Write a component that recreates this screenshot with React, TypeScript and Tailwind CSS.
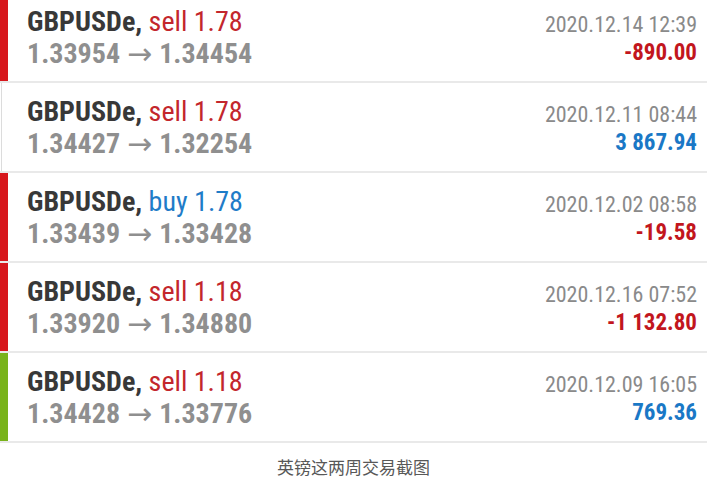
import React from 'react';

type Trade = {
  side: 'sell' | 'buy';
  lots: string;
  open: string;
  close: string;
  time: string;
  profit: string;
  stripe: 'red' | 'green' | 'none';
};

const trades: Trade[] = [
  { side: 'sell', lots: '1.78', open: '1.33954', close: '1.34454', time: '2020.12.14 12:39', profit: '-890.00', stripe: 'red' },
  { side: 'sell', lots: '1.78', open: '1.34427', close: '1.32254', time: '2020.12.11 08:44', profit: '3 867.94', stripe: 'none' },
  { side: 'buy', lots: '1.78', open: '1.33439', close: '1.33428', time: '2020.12.02 08:58', profit: '-19.58', stripe: 'red' },
  { side: 'sell', lots: '1.18', open: '1.33920', close: '1.34880', time: '2020.12.16 07:52', profit: '-1 132.80', stripe: 'red' },
  { side: 'sell', lots: '1.18', open: '1.34428', close: '1.33776', time: '2020.12.09 16:05', profit: '769.36', stripe: 'green' },
];

function Row({ t }: { t: Trade }) {
  const loss = t.profit.startsWith('-');
  return (
    <div className="flex h-[90px] border-b-2 border-[#e9e9e9]">
      {/* status stripe */}
      {t.stripe === 'red' && <div className="w-[8px] shrink-0 bg-[#d7171c]" />}
      {t.stripe === 'green' && <div className="w-[8px] shrink-0 bg-[#79b31b]" />}
      {t.stripe === 'none' && (
        <div className="w-[8px] shrink-0">
          <div className="ml-[1px] h-full w-px bg-[#dcdcdc]" />
        </div>
      )}
      <div className="flex flex-1 items-start justify-between pl-[19px] pr-[10px] pt-[13px]">
        <div className="font-stretch-condensed leading-[32px] text-[28px]">
          <div className="whitespace-nowrap">
            <span className="font-bold text-[#383838]">GBPUSDe,</span>{' '}
            <span className={t.side === 'sell' ? 'text-[#c3262c]' : 'text-[#1f7cc8]'}>
              {t.side} {t.lots}
            </span>
          </div>
          <div className="flex h-[32px] items-center whitespace-nowrap font-bold text-[#8f8f8f]">
            <span>{t.open}</span>
            <span className="mx-[7px] font-['DejaVu_Sans',sans-serif] text-[30px] leading-[32px] font-normal font-stretch-normal">
              →
            </span>
            <span>{t.close}</span>
          </div>
        </div>
        <div className="flex flex-col items-end pt-[5px] font-stretch-condensed">
          <div className="whitespace-nowrap text-[22px] leading-[27px] text-[#8a8a8a]">{t.time}</div>
          <div
            className={`whitespace-nowrap text-[23px] font-bold leading-[30px] ${
              loss ? 'text-[#c2161d]' : 'text-[#1a78c6]'
            }`}
          >
            {t.profit}
          </div>
        </div>
      </div>
    </div>
  );
}

export default function App() {
  return (
    <div className="h-[482px] w-[707px] overflow-hidden bg-white font-['Roboto',sans-serif]">
      <div className="-mt-[7px]">
        {trades.map((t, i) => (
          <Row key={i} t={t} />
        ))}
      </div>
      <div className="flex h-[48px] items-center justify-center font-['Noto_Sans_CJK_SC',sans-serif] text-[17px] text-[#585858]">
        英镑这两周交易截图
      </div>
    </div>
  );
}
